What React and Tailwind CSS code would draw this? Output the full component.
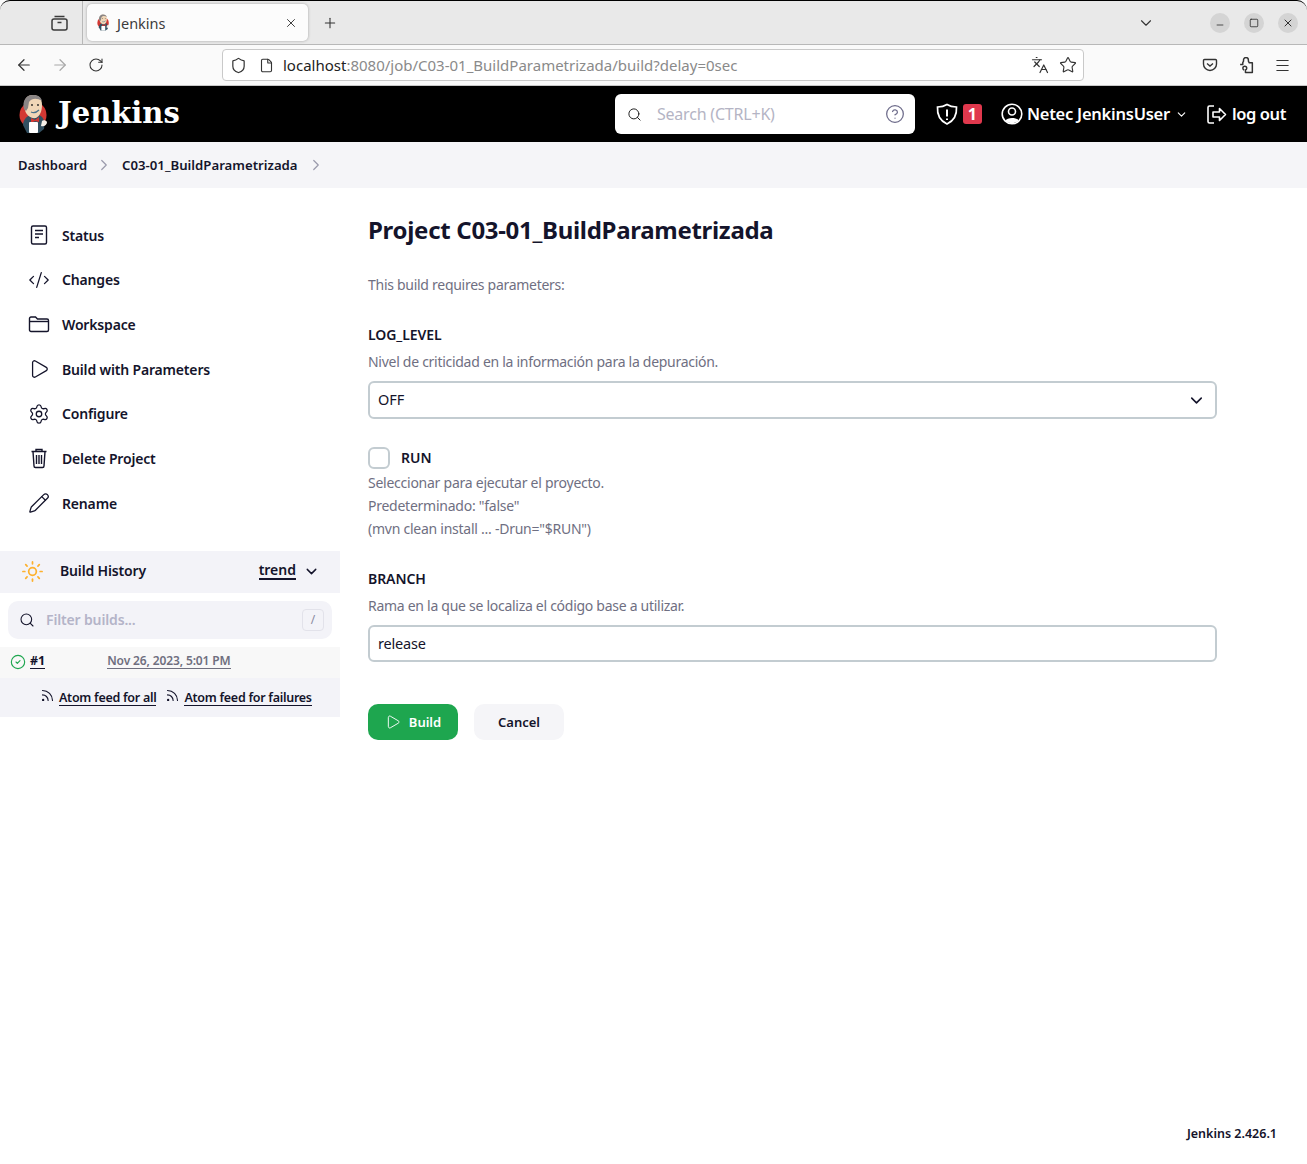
import React from 'react';
import {
  ArrowLeft, ArrowRight, RotateCw, Shield, File, Languages, Star, Menu, ChevronDown, ChevronRight,
  Search, CircleHelp, CodeXml, Play, Settings,
  Pencil, Sun, CircleCheck, Rss, X, Plus, Minus, Square,
} from 'lucide-react';

function StatusIcon(props) {
  return (
    <svg viewBox="0 0 22 22" fill="none" stroke="currentColor" strokeWidth="1.5" {...props}>
      <rect x="3.500" y="2" width="15" height="18" rx="1.500" />
      <path d="M7 6.500h8M7 10h8M7 13.500h4" />
    </svg>
  );
}

function FolderIcon(props) {
  return (
    <svg viewBox="0 0 22 22" fill="none" stroke="currentColor" strokeWidth="1.4" {...props}>
      <path d="M1.500 17V5.500a1.500 1.500 0 0 1 1.500-1.500h4.500l2 2H19a1.500 1.500 0 0 1 1.500 1.500V17a1.500 1.500 0 0 1-1.500 1.500H3A1.500 1.500 0 0 1 1.500 17Z" />
      <path d="M1.500 8.500h19" />
    </svg>
  );
}

function TrashIcon(props) {
  return (
    <svg viewBox="0 0 22 22" fill="none" stroke="currentColor" strokeWidth="1.4" {...props}>
      <path d="M3.500 4.500h15M8 4.500V2.500h6v2" />
      <path d="M5 4.500l1 14.500a1.500 1.500 0 0 0 1.500 1.500h7a1.500 1.500 0 0 0 1.500-1.500l1-14.500" />
      <path d="M8.500 8v9M11 8v9M13.500 8v9" />
    </svg>
  );
}

function PuzzleIcon(props) {
  return (
    <svg viewBox="0 0 16 16" fill="none" stroke="currentColor" strokeWidth="1.4" strokeLinejoin="round" {...props}>
      <path d="M2 7.500h2.500V6a1.200 1.200 0 0 1 .3-.8c.6-.7.4-1.200.4-1.800C5.200 2 6.300 1 7.500 1s2.300 1 2.300 2.400c0 .6-.2 1.100.4 1.800a1.200 1.200 0 0 1 .3.800h3v9H7v-2.300c.8-.4 1.200-1 1.200-1.700 0-1-.8-1.800-1.800-1.800s-1.800.8-1.800 1.800c0 .7.400 1.300 1.200 1.700" transform="translate(0 -.5)" />
    </svg>
  );
}

const sideItems = [
  { label: 'Status', icon: StatusIcon },
  { label: 'Changes', icon: CodeXml },
  { label: 'Workspace', icon: FolderIcon },
  { label: 'Build with Parameters', icon: Play },
  { label: 'Configure', icon: Settings },
  { label: 'Delete Project', icon: TrashIcon },
  { label: 'Rename', icon: Pencil },
];

function Butler({ width, height }) {
  return (
    <svg width={width} height={height} viewBox="0 0 30 40" className="shrink-0">
      <circle cx="14" cy="21" r="13.500" fill="#d33833" />
      <path d="M4 31 C4 25 9 21 13 21 L20 21 C25 23 26 28 25 35 L20 39 L8 39 Z" fill="#335061" />
      <path d="M5 12 C5 4 9 1 14 1 C20 1 23 5 23 11 C23 17 21 22 17 24 C12 25 7 21 6 16 Z" fill="#f0d6b7" />
      <path d="M5 15 C3 7 7 1 14 1 C19 1 22 3 23 7 C18 4 13 4 10 8 L9 14 L7 17 Z" fill="#8a8585" />
      <circle cx="13" cy="11" r=".9" fill="#222" />
      <circle cx="19" cy="11" r=".9" fill="#222" />
      <path d="M12 18 Q16 20 20 16" stroke="#49728b" strokeWidth="1.200" fill="none" />
      <path d="M12 24 L16 26 L20 23 L20 28 L16 27 L12 29 Z" fill="#d33833" />
      <rect x="10" y="28" width="9" height="11" rx="1" fill="#fff" />
      <path d="M23 27 C24 26 27 26 28 28 C28 31 25 33 22 32 Z" fill="#f6f0e8" />
    </svg>
  );
}

function WinButton({ children }) {
  return <div className="flex h-5 w-5 items-center justify-center rounded-full bg-[#d4d4d4] text-[#1e1e1e]">{children}</div>;
}

function BrowserChrome() {
  return (
    <div className="bg-[#fafafa]">
      <div className="flex h-[45px] items-center rounded-t-[10px] border-b border-[#b8b8b8] bg-[#e9e9e9] border-t border-t-black">
        <div className="flex h-full w-[83px] items-center justify-end border-r border-[#b8b8b8] pr-[14px]">
          <svg width="17" height="17" viewBox="0 0 17 17" fill="none" stroke="#3a3a3a" strokeWidth="1.5">
            <rect x="1" y="5" width="15" height="11" rx="2" />
            <path d="M3.500 2.500h10M6.500 8.500h4" />
          </svg>
        </div>
        <div className="ml-[4px] flex h-[37px] w-[221px] items-center rounded-[5px] bg-[#fcfcfc] pl-[9px] pr-[10px] shadow-[0_0_3px_rgba(0,0,0,0.3)]">
          <Butler width={15} height={17} />
          <span className="ml-[6px] mt-[2px] flex-1 text-[14.500px] text-[#3d3d3d]">Jenkins</span>
          <X size={14} strokeWidth={1.6} className="text-[#333]" />
        </div>
        <Plus size={16} strokeWidth={1.6} className="ml-[14px] text-[#333]" />
        <div className="flex-1" />
        <ChevronDown size={18} strokeWidth={1.5} className="mr-[55px] text-[#333]" />
        <div className="mr-[9px] flex items-center gap-[14px]">
          <WinButton><Minus size={10} strokeWidth={1.8} className="mt-[4px]" /></WinButton>
          <WinButton><Square size={10} strokeWidth={1.8} /></WinButton>
          <WinButton><X size={12} strokeWidth={1.8} /></WinButton>
        </div>
      </div>
      <div className="flex h-[41px] items-center border-b border-[#c8c8c8]">
        <ArrowLeft size={18} strokeWidth={1.6} className="ml-[15px] text-[#333]" />
        <ArrowRight size={18} strokeWidth={1.6} className="ml-[18px] text-[#a8a8a8]" />
        <RotateCw size={16} strokeWidth={1.6} className="ml-[19px] text-[#333]" />
        <div className="ml-[118px] flex h-[32px] w-[862px] items-center rounded-[4px] border border-[#c9c9c9] bg-white pl-[7px] pr-[6px]">
          <Shield size={17} strokeWidth={1.7} className="text-[#333]" />
          <File size={15} strokeWidth={1.8} className="ml-[12px] text-[#333]" />
          <span className="ml-[9px] mt-[1px] flex-1 text-[15px] text-[#8a8a8a]"><span className="text-[#222]">localhost</span>:8080/job/C03-01_BuildParametrizada/build?delay=0sec</span>
          <Languages size={18} strokeWidth={1.6} className="text-[#333]" />
          <Star size={18} strokeWidth={1.5} className="ml-[10px] text-[#333]" />
        </div>
        <svg width="16" height="16" viewBox="0 0 16 16" fill="none" stroke="#333" strokeWidth="1.4" className="ml-[118px]">
          <path d="M2.500 2.500h11a1 1 0 0 1 1 1V7a6.500 6.500 0 0 1-13 0V3.500a1 1 0 0 1 1-1Z" />
          <path d="M5 6.500l3 2.500 3-2.500" />
        </svg>
        <PuzzleIcon width="17" height="17" className="ml-[20px] text-[#333]" />
        <Menu size={17} strokeWidth={1.5} className="ml-[19px] text-[#333]" />
      </div>
    </div>
  );
}

function JenkinsHeader() {
  return (
    <header className="flex h-14 items-center bg-black pl-[19px] pr-[21px] text-white">
      <Butler width={30} height={40} />
      <span className="ml-[9px] -mt-[2px] font-['DejaVu_Serif'] text-[29px] font-bold leading-none">Jenkins</span>
      <div className="flex-1" />
      <div className="flex h-10 w-[300px] items-center rounded-[6px] bg-white pl-[12px] pr-[10px]">
        <Search size={15} strokeWidth={1.6} className="text-[#222]" />
        <span className="ml-[15px] flex-1 text-[16px] tracking-[-0.2px] text-[#b4b4c4]">Search (CTRL+K)</span>
        <CircleHelp size={20} strokeWidth={1.5} className="text-[#6d6b8a]" />
      </div>
      <svg width="24" height="24" viewBox="0 0 24 24" fill="none" stroke="#fff" strokeWidth="1.700" className="ml-[20px]">
        <path d="M12 2.500 C15 4.500 18 5 21.500 5 C22 13 18.500 19 12 22 C5.500 19 2 13 2.500 5 C6 5 9 4.500 12 2.500 Z" />
        <path d="M12 7.500v7M12 16.500v1.500" strokeWidth="2" />
      </svg>
      <span className="ml-[4px] flex h-5 w-[19px] items-center justify-center rounded-[3px] bg-[#e0384d] text-[16px] font-bold">1</span>
      <svg width="22" height="22" viewBox="0 0 22 22" className="ml-[19px]">
        <circle cx="11" cy="11" r="9.800" fill="none" stroke="#fff" strokeWidth="1.600" />
        <circle cx="11" cy="8.500" r="3.500" fill="none" stroke="#fff" strokeWidth="1.600" />
        <path d="M4.500 17.500 C6 14 16 14 17.500 17.500 C14 21 8 21 4.500 17.500 Z" fill="#fff" />
      </svg>
      <span className="ml-[4px] text-[16.500px] font-semibold tracking-[-0.25px]">Netec JenkinsUser</span>
      <ChevronDown size={13} strokeWidth={2} className="ml-[5px]" />
      <svg width="21" height="21" viewBox="0 0 21 21" fill="none" stroke="#fff" strokeWidth="1.600" className="ml-[18px]">
        <path d="M8 2H3.500A1.500 1.500 0 0 0 2 3.500v14A1.500 1.500 0 0 0 3.500 19H8" />
        <path d="M7 8h6.500V4.500l6 6-6 6V13H7Z" strokeLinejoin="round" />
      </svg>
      <span className="ml-[5px] text-[16.500px] font-semibold tracking-[-0.4px]">log out</span>
    </header>
  );
}

function Breadcrumb() {
  return (
    <nav className="flex h-[46px] items-center bg-[#f5f5f8] pl-[18px] text-[13px] font-semibold text-[#14142b]">
      <span className="mt-[1px]">Dashboard</span>
      <ChevronRight size={18} strokeWidth={1.6} className="ml-[8px] text-[#9a9aac]" />
      <span className="ml-[9px] mt-[1px] text-[13.200px]">C03-01_BuildParametrizada</span>
      <ChevronRight size={18} strokeWidth={1.6} className="ml-[9px] text-[#9a9aac]" />
    </nav>
  );
}

function Sidebar() {
  return (
    <aside className="w-[340px] shrink-0 pt-[31px]">
      <div className="flex flex-col gap-[12.700px] pl-[28px]">
        {sideItems.map(({ label, icon: Icon }) => (
          <div key={label} className="flex h-8 items-center">
            <Icon width={22} height={22} strokeWidth={1.4} className="text-[#14142b]" />
            <span className="ml-[12px] text-[14px] font-semibold tracking-[-0.17px] text-[#14142b]">{label}</span>
          </div>
        ))}
      </div>
      <div className="mt-[31.800px] flex h-[42px] items-center bg-[#f3f3f8] pl-[21px] pr-[20px]">
        <Sun size={23} strokeWidth={1.8} className="text-[#fdb12e]" />
        <span className="ml-[16px] -mt-[3px] flex-1 text-[14px] font-semibold tracking-[-0.15px] text-[#14142b]">Build History</span>
        <span className="-mt-[3px] border-b-2 border-[#14142b] text-[14px] font-semibold leading-[17px] text-[#14142b]">trend</span>
        <ChevronDown size={17} strokeWidth={2} className="ml-[7px] text-[#14142b]" />
      </div>
      <div className="mx-2 mt-2 flex h-[38px] items-center rounded-[10px] bg-[#f3f3f8] pl-[11px] pr-2">
        <Search size={16} strokeWidth={1.6} className="text-[#14142b]" />
        <span className="ml-[11px] flex-1 text-[14px] font-semibold tracking-[-0.15px] text-[#b4b4c8]">Filter builds...</span>
        <span className="flex h-[22px] w-[22px] items-center justify-center rounded-[4px] border border-[#e2e2ea] text-[12px] text-[#8a8aa0]">/</span>
      </div>
      <div className="mt-2 flex h-[31px] items-center bg-[#f8f8f8] pl-[10px]">
        <CircleCheck size={16} strokeWidth={1.7} className="text-[#1ea64f]" />
        <span className="ml-[4px] -mt-[3px] border-b border-[#14142b] text-[12.500px] font-bold leading-[15px] text-[#14142b]">#1</span>
        <span className="ml-[62px] -mt-[3px] border-b border-[#6f6f7f] text-[12px] font-semibold leading-[15px] tracking-[-0.13px] text-[#6f6f7f]">Nov 26, 2023, 5:01 PM</span>
      </div>
      <div className="flex h-[39px] items-center bg-[#f3f3f8] pl-[40px] pt-[1px] text-[12.500px] font-semibold tracking-[-0.28px] text-[#14142b]">
        <Rss size={15} strokeWidth={1.8} className="-mt-[5px]" />
        <span className="ml-[4px] border-b border-[#14142b] leading-[15px]">Atom feed for all</span>
        <Rss size={15} strokeWidth={1.8} className="-mt-[5px] ml-[9px]" />
        <span className="ml-[4px] border-b border-[#14142b] leading-[15px]">Atom feed for failures</span>
      </div>
    </aside>
  );
}

function Field({ label, help, children }) {
  return (
    <div>
      <div className="text-[14px] font-semibold leading-[20px] tracking-[-0.08px] text-[#14142b]">{label}</div>
      <div className="mt-[7px] text-[14px] leading-[20px] tracking-[-0.28px] text-[#6f6f82]">{help}</div>
      <div className="mt-[9px]">{children}</div>
    </div>
  );
}

function BuildForm() {
  return (
    <main className="ml-[28px] w-[849px] pt-[27px]">
      <h1 className="text-[24px] font-bold leading-[30px] tracking-[-0.3px] text-[#14142b]">Project C03-01_BuildParametrizada</h1>
      <p className="mt-[30px] text-[14px] leading-[20px] tracking-[-0.28px] text-[#6f6f82]">This build requires parameters:</p>
      <div className="mt-[30px]">
        <Field label="LOG_LEVEL" help="Nivel de criticidad en la información para la depuración.">
          <div className="flex h-[38px] items-center rounded-[6px] border-2 border-[#c3ccd1] pl-[8px] pr-[9px] text-[14.500px] text-[#14142b]">
            <span className="flex-1">OFF</span>
            <ChevronDown size={19} strokeWidth={2} />
          </div>
        </Field>
      </div>
      <div className="mt-[28px] flex h-[22px] items-center">
        <div className="h-[22px] w-[22px] rounded-[6px] border-2 border-[#c3ccd1]" />
        <span className="ml-[11px] -mt-[1px] text-[14px] font-semibold text-[#14142b]">RUN</span>
      </div>
      <div className="mt-[2px] text-[14px] leading-[23px] tracking-[-0.25px] text-[#6f6f82]">
        <div>Seleccionar para ejecutar el proyecto.</div>
        <div>Predeterminado: "false"</div>
        <div>(mvn clean install ... -Drun="$RUN")</div>
      </div>
      <div className="mt-[29px]">
        <Field label="BRANCH" help="Rama en la que se localiza el código base a utilizar.">
          <div className="flex h-[37px] items-center rounded-[6px] border-2 border-[#c3ccd1] pl-[8px] text-[14.500px] tracking-[-0.2px] text-[#14142b]">release</div>
        </Field>
      </div>
      <div className="mt-[42px] flex gap-4">
        <button className="flex h-9 w-[90px] items-center justify-center rounded-[10px] bg-[#1ea64f] text-[13px] font-semibold text-white">
          <Play size={16} strokeWidth={1.4} className="mr-[8px]" />
          <span className="mt-[1px]">Build</span>
        </button>
        <button className="h-9 w-[90px] rounded-[10px] bg-[#f5f5f8] pt-[1px] text-[13px] font-semibold text-[#14142b]">Cancel</button>
      </div>
    </main>
  );
}

export default function App() {
  return (
    <div className="flex min-h-[1164px] flex-col bg-white font-['Noto_Sans',sans-serif]">
      <BrowserChrome />
      <JenkinsHeader />
      <Breadcrumb />
      <div className="flex flex-1">
        <Sidebar />
        <BuildForm />
      </div>
      <footer className="pb-[22px] pr-[30px] text-right text-[12.500px] font-semibold leading-[17px] text-[#14142b]">Jenkins 2.426.1</footer>
    </div>
  );
}
